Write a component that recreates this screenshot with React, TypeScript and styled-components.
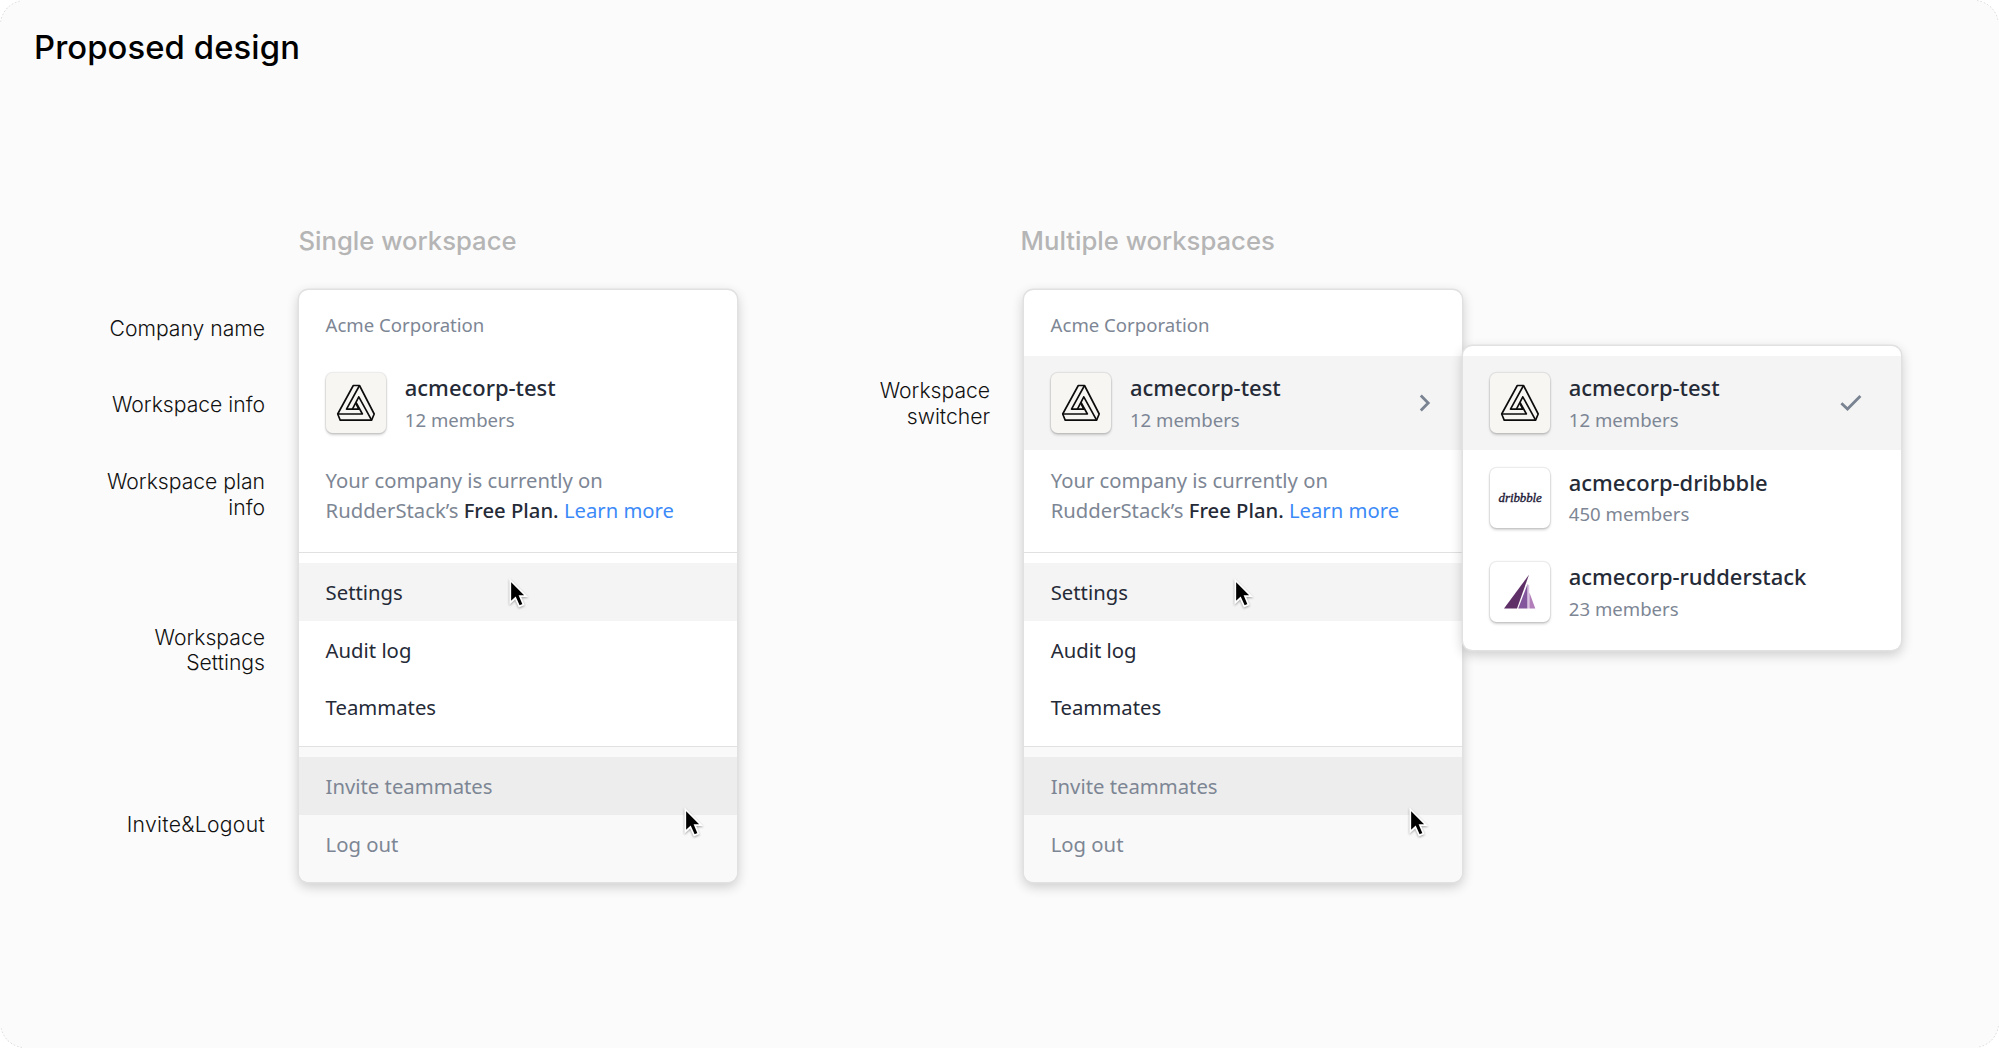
import React from "react";
import styled, { createGlobalStyle } from "styled-components";

const GlobalStyle = createGlobalStyle`
  *, *::before, *::after { box-sizing: border-box; }
  html, body { margin: 0; background: #fff; }
  body { font-family: "Noto Sans", "Open Sans", sans-serif; color: #252a37; }
`;

const Board = styled.main`
  position: relative;
  width: 1999px;
  height: 1048px;
  overflow: hidden;
  border-radius: 25px;
  background: #fbfbfb;
`;

const CornerMarks = styled.svg`
  position: absolute;
  inset: 0;
  pointer-events: none;
`;

const Heading = styled.h1`
  margin: 0;
  padding: 27px 0 0 34px;
  height: 224px;
  font: 450 32.8px/40px Inter, sans-serif;
  letter-spacing: 0.1px;
  color: #000;
`;

const Stage = styled.div`
  display: flex;
  align-items: flex-start;
`;

const Labels = styled.aside<{ $width: number; $rows: string }>`
  display: grid;
  grid-template-rows: ${(p) => p.$rows};
  width: ${(p) => p.$width}px;
  justify-items: end;
`;

const Label = styled.p<{ $width?: number; $tracking?: number }>`
  margin: 0;
  width: ${(p) => (p.$width ? `${p.$width}px` : "auto")};
  text-align: right;
  font: 350 21.15px/25.6px Inter, sans-serif;
  letter-spacing: ${(p) => p.$tracking ?? 0}px;
  color: #111;
`;

const Column = styled.section<{ $gap: number }>`
  margin-left: ${(p) => p.$gap}px;
  width: 438.3px;
`;

const ColumnTitle = styled.h2<{ $shift: number }>`
  margin: 0 0 32px ${(p) => p.$shift}px;
  font: 450 25.65px/34px Inter, sans-serif;
  white-space: nowrap;
  color: #b5b5b5;
`;

const Panel = styled.div`
  position: relative;
  border-radius: 9.5px;
  background: #fff;
  box-shadow: 0 0 0 1.4px #e1e1e2, 0 4px 12px 1px rgba(0, 0, 0, 0.19);
`;

const Company = styled.div`
  height: 66px;
  padding: 22.3px 26.5px 0;
  font-size: 18.6px;
  line-height: 26px;
  color: #7d8694;
`;

const WorkspaceRow = styled.div<{ $active?: boolean }>`
  display: flex;
  align-items: center;
  height: 94.4px;
  padding: 0 27px 0 27.2px;
  background: ${(p) => (p.$active ? "#f4f4f4" : "transparent")};
`;

const Tile = styled.div<{ $tint?: boolean }>`
  display: flex;
  flex: none;
  width: 60px;
  height: 60px;
  align-items: center;
  justify-content: center;
  border-radius: 6.5px;
  background: ${(p) => (p.$tint ? "#f7f6f3" : "#fff")};
  box-shadow: 0 0 0 1.2px rgba(0, 0, 0, 0.07), 0 2px 3px rgba(0, 0, 0, 0.18);
`;

const Wordmark = styled.span`
  font: italic 400 13px/16px "Liberation Serif", serif;
  letter-spacing: -0.1px;
  color: #1c1836;
  -webkit-text-stroke: 0.35px #1c1836;
`;

const Details = styled.div`
  flex: 1;
  margin-left: 18.6px;
  white-space: nowrap;
`;

const Name = styled.div`
  font-size: 21.95px;
  font-weight: 500;
  line-height: 31px;
`;

const Members = styled.div`
  font-size: 18.6px;
  line-height: 27px;
  padding-top: 2.4px;
  height: 30.6px;
  color: #7d8694;
`;

const Plan = styled.p`
  margin: 0;
  height: 101.3px;
  padding: 14.6px 26.6px 0;
  font-size: 20.26px;
  line-height: 30.4px;
  white-space: nowrap;
  color: #7d8694;
`;

const PlanName = styled.span`
  font-weight: 500;
  color: #252a37;
`;

const LearnMore = styled.a`
  color: #3c8af7;
`;

const MenuGroup = styled.div<{ $muted?: boolean }>`
  padding: ${(p) => (p.$muted ? "11.8px 0 9.4px" : "11.6px 0 10.2px")};
  border-radius: ${(p) => (p.$muted ? "0 0 9.5px 9.5px" : "0")};
  background: linear-gradient(#e1e1e2, #e1e1e2) 0 0 / 100% 1.4px no-repeat ${(p) => (p.$muted ? "#f9f9f9" : "#fff")};
  color: ${(p) => (p.$muted ? "#7d8694" : "#252a37")};
`;

const MenuItem = styled.div<{ $hover?: string }>`
  height: 57.4px;
  padding: 1px 26.6px 0;
  font-size: 20.3px;
  line-height: 57.4px;
  background: ${(p) => p.$hover ?? "transparent"};
`;

const Flyout = styled(Panel)`
  margin: 122px 0 0 0.6px;
  width: 438.3px;
  padding: 10px 0 10.4px;
`;

const Pointer = styled.svg<{ $x: number; $y: number }>`
  position: absolute;
  left: ${(p) => p.$x}px;
  top: ${(p) => p.$y}px;
  width: 22px;
  height: 34px;
  overflow: visible;
  filter: drop-shadow(0 1.5px 1px rgba(0, 0, 0, 0.35));
`;

const Cursor = ({ x, y }: { x: number; y: number }) => (
  <Pointer $x={x} $y={y} viewBox="0 0 22 34">
    <path
      d="M1.3 2.2V24.7L6.4 20L10.2 28.4L14.5 26.6L10.9 18.2H17.2Z"
      fill="#000"
      stroke="#fff"
      strokeWidth="1.7"
    />
  </Pointer>
);

const AcmeLogo = () => (
  <svg width="60" height="60" viewBox="0 0 60 60" fill="none" stroke="#0c0c0c" strokeWidth="1.65" strokeLinejoin="round">
    <path d="M27.3 12.5H33.5L48.2 41L45.6 47.1H14.2L11.7 41Z" />
    <path d="M11.7 41H36.4L30 29.4" />
    <path d="M33.5 12.5L20.5 36.1H32.8L30 30.6" />
    <path d="M45.6 47.1L32.8 23.8L26.4 36.1" />
  </svg>
);

const SailLogo = () => (
  <svg width="60" height="60" viewBox="0 0 60 60">
    <path d="M39 12.8L14 46.5H27Z" fill="#5f2f68" />
    <path d="M37.6 22L28.2 46.5H37.6Z" fill="#83559c" />
    <path d="M37.6 22L39.2 23.4V46.5H37.6Z" fill="#d9c2e2" />
    <path d="M39.4 30.4L45.3 46.5H39.4Z" fill="#b27fbb" />
  </svg>
);

const ChevronIcon = () => (
  <svg width="12" height="18" viewBox="0 0 12 18" fill="none" stroke="#7a8391" strokeWidth="2.8">
    <path d="M1.8 1.6L9.2 9L1.8 16.4" />
  </svg>
);

const CheckIcon = () => (
  <svg width="22" height="18" viewBox="0 0 22 18" fill="none" stroke="#7a8391" strokeWidth="2.8">
    <path d="M1.4 9.2L7.5 15.1L20.4 2" />
  </svg>
);

const IconSlot = styled.span<{ $inset: number }>`
  display: flex;
  margin-right: ${(p) => p.$inset}px;
`;

type WorkspaceProps = {
  name: string;
  members: number;
  logo: React.ReactNode;
  tint?: boolean;
  active?: boolean;
  children?: React.ReactNode;
};

const Workspace = ({ name, members, logo, tint, active, children }: WorkspaceProps) => (
  <WorkspaceRow $active={active}>
    <Tile $tint={tint}>{logo}</Tile>
    <Details>
      <Name>{name}</Name>
      <Members>{members} members</Members>
    </Details>
    {children}
  </WorkspaceRow>
);

const WorkspaceMenu = ({ multiple }: { multiple?: boolean }) => (
  <Panel>
    <Company>Acme Corporation</Company>
    <Workspace name="acmecorp-test" members={12} logo={<AcmeLogo />} tint active={multiple}>
      {multiple && (
        <IconSlot $inset={4}>
          <ChevronIcon />
        </IconSlot>
      )}
    </Workspace>
    <Plan>
      Your company is currently on
      <br />
      RudderStack’s <PlanName>Free Plan.</PlanName> <LearnMore>Learn more</LearnMore>
    </Plan>
    <MenuGroup>
      <MenuItem $hover="#f4f4f4">Settings</MenuItem>
      <MenuItem>Audit log</MenuItem>
      <MenuItem>Teammates</MenuItem>
    </MenuGroup>
    <MenuGroup $muted>
      <MenuItem $hover="#ededed">Invite teammates</MenuItem>
      <MenuItem>Log out</MenuItem>
    </MenuGroup>
    <Cursor x={209.8} y={287.5} />
    <Cursor x={385} y={516.8} />
  </Panel>
);

export default function App() {
  return (
    <>
      <GlobalStyle />
      <Board>
        <CornerMarks width="1999" height="1048" fill="none" stroke="#c8c8c8" strokeWidth="0.8" strokeDasharray="1.6 2">
          <path d="M0.5 22A25 25 0 0 1 22 0.5" />
          <path d="M1977 0.5A25 25 0 0 1 1998.5 22" />
          <path d="M1998.5 1026A25 25 0 0 1 1977 1047.5" />
          <path d="M22 1047.5A25 25 0 0 1 0.5 1026" />
        </CornerMarks>
        <Heading>Proposed design</Heading>
        <Stage>
          <Labels $width={265} $rows="92.3px 75.7px 77px 155.6px 187.8px auto">
            <span />
            <Label>Company name</Label>
            <Label>Workspace info</Label>
            <Label $width={170}>Workspace plan info</Label>
            <Label $width={120}>Workspace Settings</Label>
            <Label $tracking={0.3}>Invite&amp;Logout</Label>
          </Labels>
          <Column $gap={34}>
            <ColumnTitle $shift={-0.5}>Single workspace</ColumnTitle>
            <WorkspaceMenu />
          </Column>
          <Labels $width={252.8} $rows="154px auto">
            <span />
            <Label $width={120}>Workspace switcher</Label>
          </Labels>
          <Column $gap={34}>
            <ColumnTitle $shift={-3.5}>Multiple workspaces</ColumnTitle>
            <WorkspaceMenu multiple />
          </Column>
          <Flyout>
            <Workspace name="acmecorp-test" members={12} logo={<AcmeLogo />} tint active>
              <IconSlot $inset={12.5}>
                <CheckIcon />
              </IconSlot>
            </Workspace>
            <Workspace name="acmecorp-dribbble" members={450} logo={<Wordmark>dribbble</Wordmark>} />
            <Workspace name="acmecorp-rudderstack" members={23} logo={<SailLogo />} />
          </Flyout>
        </Stage>
      </Board>
    </>
  );
}
